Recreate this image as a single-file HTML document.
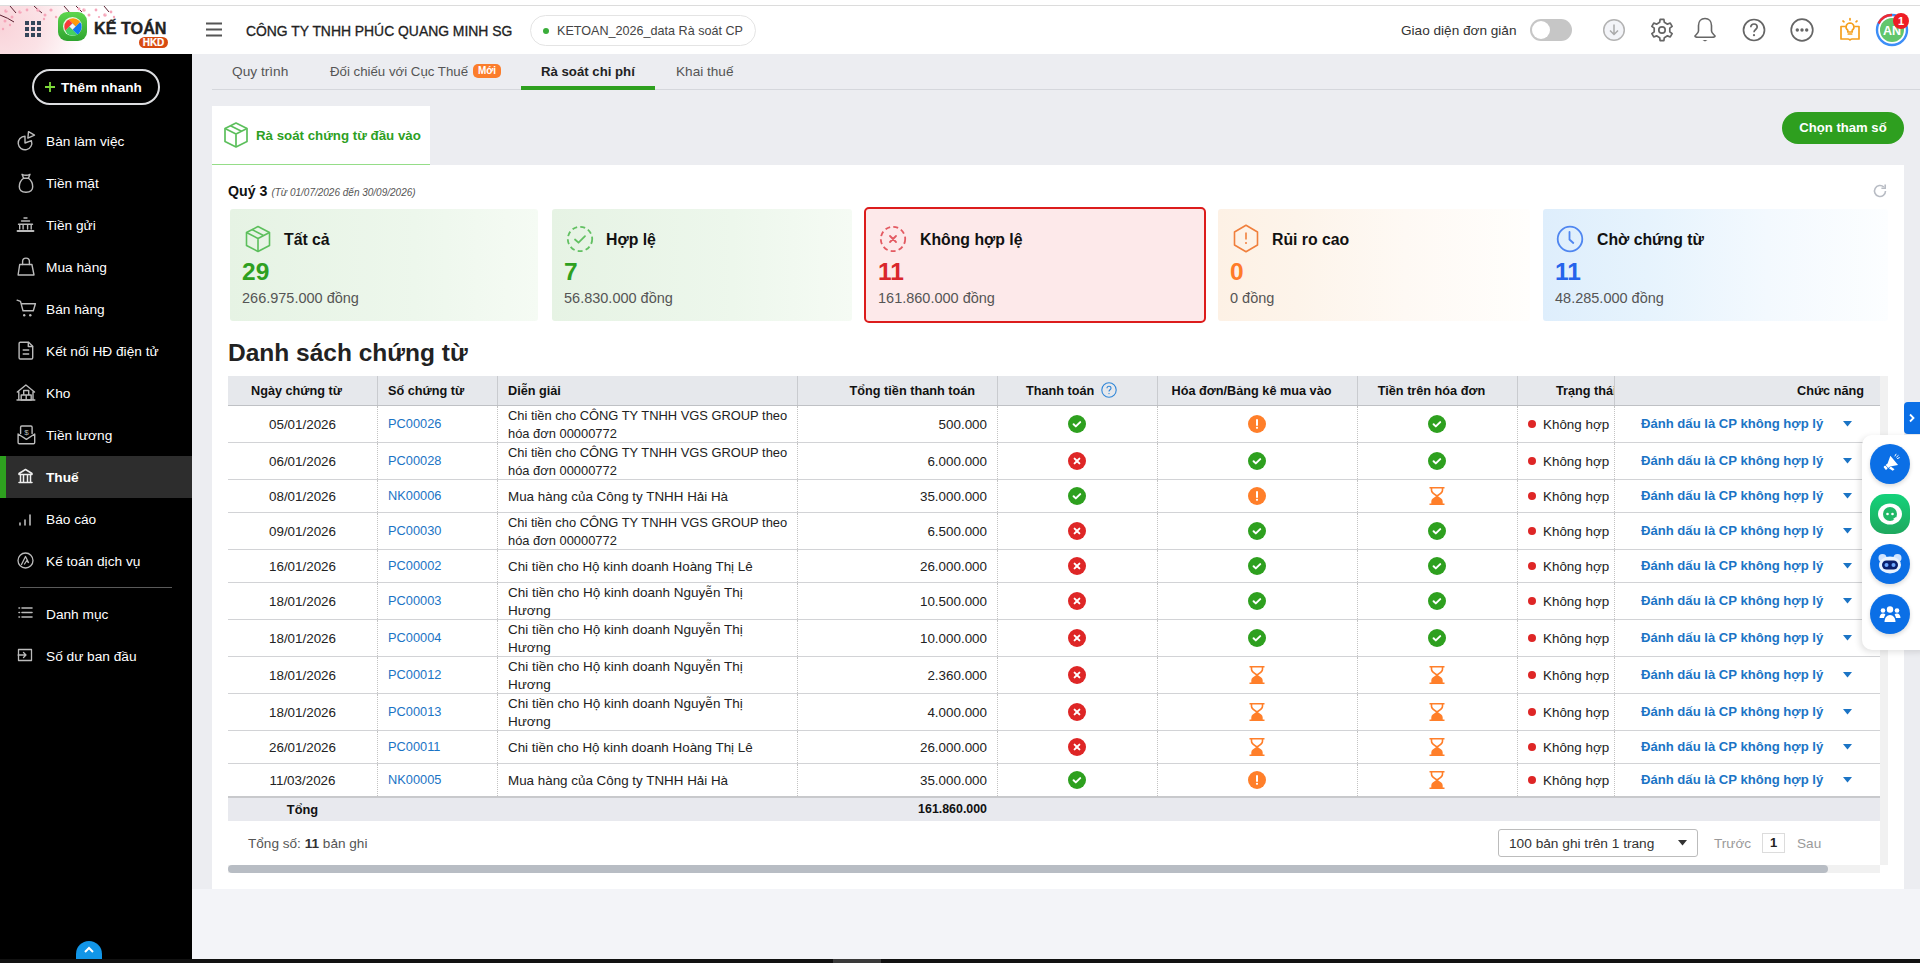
<!DOCTYPE html>
<html><head><meta charset="utf-8">
<style>
*{box-sizing:border-box;margin:0;padding:0}
html,body{width:1920px;height:963px;overflow:hidden}
body{position:relative;background:#f3f4f8;font-family:"Liberation Sans",sans-serif;color:#222;font-size:13.5px}
.abs{position:absolute}
#topline{left:0;top:0;width:1920px;height:6px;background:#fff;border-bottom:1px solid #dcdcdc}
#header{left:0;top:6px;width:1920px;height:48px;background:#fff}
#blossom{left:0;top:6px;width:135px;height:48px;background:radial-gradient(ellipse 85px 75px at 0px 20px,#f9d3d9 0%,#fbe2e6 50%,rgba(255,255,255,0) 100%)}
#sidebar{left:0;top:54px;width:192px;height:905px;background:#000}
#main{left:192px;top:54px;width:1728px;height:835px;background:#ecedf1}
#bottombar{left:0;top:959px;width:1920px;height:4px;background:#111}
.menu{position:absolute;left:0;width:192px;height:42px;color:#fff;font-size:13.7px;line-height:42px}
.menu span.t{position:absolute;left:46px;top:1px}
.menu svg{position:absolute;left:17px;top:12px}
.menu.active{background:#2d2d2d}
.menu.active:before{content:"";position:absolute;left:0;top:0;width:6px;height:42px;background:#2ea01f}
.menu.active span.t{font-weight:bold}
.cardt{top:230px;font-size:15.8px;font-weight:bold;color:#111;line-height:20px}
.cardn{top:258px;font-size:24.5px;font-weight:bold;line-height:28px}
.carda{top:289px;font-size:14.5px;color:#555;line-height:18px}
</style></head>
<body>
<div id="topline" class="abs"></div>
<div id="header" class="abs"></div>
<div id="blossom" class="abs"></div>

<div class="abs" style="left:0;top:6px;width:1920px;height:48px">
  <!-- blossoms -->
  <svg class="abs" style="left:0;top:0" width="130" height="48" viewBox="0 0 130 48">
    <path d="M0 9 Q8 12 14 16 M10 0 L16 7 M34 0 Q38 4 42 7 M64 0 L70 7 M76 0 L82 6 M104 0 L109 6" stroke="#5a2030" stroke-width="1" fill="none"/>
    <g fill="#f6a6ba">
      <circle cx="6" cy="5" r="1.8"/><circle cx="12" cy="11" r="1.5"/><circle cx="20" cy="6" r="1.8"/><circle cx="27" cy="4" r="1.4"/>
      <circle cx="38" cy="4" r="1.8"/><circle cx="45" cy="9" r="1.5"/><circle cx="51" cy="4" r="1.6"/><circle cx="44" cy="13" r="1.2"/>
      <circle cx="84" cy="4" r="1.8"/><circle cx="89" cy="9" r="1.5"/><circle cx="79" cy="3" r="1.4"/><circle cx="96" cy="4" r="1.4"/>
      <circle cx="105" cy="9" r="1.8"/><circle cx="111" cy="6" r="1.4"/><circle cx="114" cy="11" r="1.2"/><circle cx="5" cy="15" r="1.5"/>
      <circle cx="3" cy="23" r="1.2"/><circle cx="10" cy="19" r="1.2"/><circle cx="56" cy="11" r="1.2"/><circle cx="99" cy="11" r="1.1"/>
    </g>
    <g fill="#fff" opacity="0.8">
      <circle cx="7" cy="4" r="0.7"/><circle cx="21" cy="5" r="0.7"/><circle cx="39" cy="3" r="0.7"/><circle cx="85" cy="3" r="0.7"/><circle cx="106" cy="8" r="0.7"/>
    </g>
  </svg>
  <!-- grid -->
  <svg class="abs" style="left:25px;top:15px" width="16" height="16" viewBox="0 0 16 16" fill="#34465a">
    <rect x="0" y="0" width="4" height="4"/><rect x="6" y="0" width="4" height="4"/><rect x="12" y="0" width="4" height="4"/>
    <rect x="0" y="6" width="4" height="4"/><rect x="6" y="6" width="4" height="4"/><rect x="12" y="6" width="4" height="4"/>
    <rect x="0" y="12" width="4" height="4"/><rect x="6" y="12" width="4" height="4"/><rect x="12" y="12" width="4" height="4"/>
  </svg>
  <!-- logo -->
  <div class="abs" style="left:58px;top:6px;width:29px;height:29px;border-radius:9px;background:linear-gradient(#5ed64e,#2ea42f)"></div>
  <svg class="abs" style="left:62px;top:10px" width="21" height="21" viewBox="0 0 21 21">
    <defs><clipPath id="lc"><circle cx="10.5" cy="10.5" r="8.7"/></clipPath></defs>
    <circle cx="10.5" cy="10.5" r="9.5" fill="#e9f7e6"/>
    <g clip-path="url(#lc)" transform="translate(0.5 0.5)">
      <path d="M10 6.8L-10 -13.2L36.4 -13.2L13.2 10Z" fill="#ff9a0a"/>
      <path d="M13.2 10L36.4 -13.2L40 -13.2L40 33.2L30 33.2L10 13.2Z" fill="#0f78f2"/>
      <path d="M10 13.2L30 33.2L-16.4 33.2L6.8 10Z" fill="#45d160"/>
      <path d="M6.8 10L-16.4 33.2L-20 33.2L-20 -13.2L-10 -13.2L10 6.8Z" fill="#f83a3a"/>
      <path d="M10 6.8L13.2 10L10 13.2L6.8 10Z" fill="#f2f5f8" stroke="#556" stroke-width="0.3"/>
    </g>
  </svg>
  <div class="abs" style="left:94px;top:12px;font-size:16.2px;font-weight:bold;color:#222;line-height:20px;letter-spacing:0;-webkit-text-stroke:0.35px #222">KẾ TOÁN</div>
  <div class="abs" style="left:139px;top:31px;width:29px;height:11px;border-radius:6px;background:#d84a10;color:#fff;font-size:10px;font-weight:bold;line-height:11px;text-align:center;-webkit-text-stroke:0.2px #fff">HKD</div>
  <!-- hamburger -->
  <svg class="abs" style="left:205px;top:16px" width="18" height="15" viewBox="0 0 18 15"><path d="M1 1.5h16M1 7.5h16M1 13.5h16" stroke="#555" stroke-width="1.8"/></svg>
  <div class="abs" style="left:246px;top:16px;font-size:13.9px;color:#222;line-height:18px;-webkit-text-stroke:0.3px #222">CÔNG TY TNHH PHÚC QUANG MINH SG</div>
  <div class="abs" style="left:530px;top:9px;width:226px;height:31px;border:1px solid #e4e4e4;border-radius:16px"></div>
  <div class="abs" style="left:543px;top:22px;width:6px;height:6px;border-radius:3px;background:#3aad3a"></div>
  <div class="abs" style="left:557px;top:16px;font-size:12.6px;color:#444;line-height:18px">KETOAN_2026_data Rà soát CP</div>
  <!-- right -->
  <div class="abs" style="left:1401px;top:16px;font-size:13.6px;color:#333;line-height:18px">Giao diện đơn giản</div>
  <div class="abs" style="left:1530px;top:13px;width:42px;height:22px;border-radius:11px;background:#c6c6c6"></div>
  <div class="abs" style="left:1532px;top:15px;width:18px;height:18px;border-radius:9px;background:#fff"></div>
  <svg class="abs" style="left:1602px;top:12px" width="24" height="24" viewBox="0 0 24 24"><circle cx="12" cy="12" r="10.3" fill="#f3f4f8" stroke="#b3b3b3" stroke-width="1.5"/><path d="M12 6.5v10M8 12.5l4 4 4-4" fill="none" stroke="#aaa" stroke-width="1.5"/></svg>
  <svg class="abs" style="left:1650px;top:12px" width="24" height="24" viewBox="0 0 24 24"><path fill="none" stroke="#666" stroke-width="1.7" stroke-linejoin="round" d="M9.66 4.35 L10.12 1.36 L13.88 1.36 L14.34 4.35 L17.46 6.15 L20.27 5.06 L22.15 8.31 L19.79 10.20 L19.79 13.80 L22.15 15.69 L20.27 18.94 L17.46 17.85 L14.34 19.65 L13.88 22.64 L10.12 22.64 L9.66 19.65 L6.54 17.85 L3.73 18.94 L1.85 15.69 L4.21 13.80 L4.21 10.20 L1.85 8.31 L3.73 5.06 L6.54 6.15Z"/><circle cx="12" cy="12" r="3.2" fill="none" stroke="#666" stroke-width="1.7"/></svg>
  <svg class="abs" style="left:1693px;top:11px" width="24" height="26" viewBox="0 0 24 26"><path d="M12 1.5c-4 0-6.5 3-6.5 7v5.5c0 2-2.5 3.5-3.5 5 0 .8 1 1.2 3 1.2h14c2 0 3-.4 3-1.2-1-1.5-3.5-3-3.5-5V8.5c0-4-2.5-7-6.5-7Z" fill="none" stroke="#666" stroke-width="1.6"/><path d="M9.5 23h5l-2.5 1.6Z" fill="#666"/></svg>
  <svg class="abs" style="left:1742px;top:12px" width="24" height="24" viewBox="0 0 24 24"><circle cx="12" cy="12" r="10.5" fill="none" stroke="#666" stroke-width="1.7"/><path d="M8.8 9.2c0-1.9 1.4-3.2 3.2-3.2s3.2 1.2 3.2 3c0 2.4-3.2 2.6-3.2 5.2" fill="none" stroke="#666" stroke-width="1.7"/><circle cx="12" cy="17.2" r="1.1" fill="#666"/></svg>
  <svg class="abs" style="left:1790px;top:12px" width="24" height="24" viewBox="0 0 24 24"><circle cx="12" cy="12" r="10.8" fill="none" stroke="#666" stroke-width="1.7"/><circle cx="7.3" cy="12" r="1.7" fill="#666"/><circle cx="12" cy="12" r="1.7" fill="#666"/><circle cx="16.7" cy="12" r="1.7" fill="#666"/></svg>
  <svg class="abs" style="left:1839px;top:11px" width="22" height="24" viewBox="0 0 22 24"><g fill="none" stroke="#f5a01f" stroke-width="1.7" stroke-linecap="round" stroke-linejoin="round"><path d="M11 1.5v1.5M4 4l1 .8M18 4l-1 .8"/><path d="M11 6a4 4 0 0 0-2.2 7.3v1.7h4.4v-1.7A4 4 0 0 0 11 6Z"/><path d="M9.3 17h3.4"/><path d="M6 9.5H2v12.5h7c1 0 1.5.5 2 1 .5-.5 1-1 2-1h7V9.5h-4"/></g></svg>
  <svg class="abs" style="left:1874px;top:0px" width="40" height="42" viewBox="0 0 40 42"><circle cx="18" cy="24" r="15" fill="none" stroke="#3d8ef7" stroke-width="2.4"/><path d="M4.6 17.5A15 15 0 0 1 18 9" fill="none" stroke="#ee2a33" stroke-width="2.4"/><circle cx="18" cy="24" r="12" fill="#62c66c"/><text x="18" y="28.5" font-size="12.5" font-weight="bold" fill="#fff" text-anchor="middle" font-family="Liberation Sans">AN</text><circle cx="27" cy="15" r="8" fill="#ee1c25"/><text x="27" y="19" font-size="11" font-weight="bold" fill="#fff" text-anchor="middle" font-family="Liberation Sans">1</text></svg>
</div>
<div id="sidebar" class="abs">
  <div class="abs" style="left:32px;top:15px;width:128px;height:36px;border:2px solid #dcdde0;border-radius:18px"></div>
  <svg class="abs" style="left:45px;top:28px" width="10" height="10" viewBox="0 0 10 10"><path d="M5 0v10M0 5h10" stroke="#7ddb3a" stroke-width="1.8"/></svg>
  <div class="abs" style="left:61px;top:26px;color:#fff;font-weight:bold;font-size:13.6px;line-height:16px">Thêm nhanh</div>
<div class="menu" style="top:66px"><svg style="left:16px;top:10px;overflow:visible" width="20" height="20" viewBox="0 0 20 20" stroke="#bbb" stroke-width="1.4" stroke-linecap="round" stroke-linejoin="round"><path d="M9 13L9 6.2A6.8 6.8 0 1 0 15.4 10.7Z" fill="none"/><path d="M12.5 1.6L18.5 5.2L11.9 8.1Z" fill="none"/></svg><span class="t">Bàn làm việc</span></div>
<div class="menu" style="top:108px"><svg style="left:16px;top:10px;overflow:visible" width="20" height="20" viewBox="0 0 20 20" stroke="#bbb" stroke-width="1.4" stroke-linecap="round" stroke-linejoin="round"><path d="M6 2.3Q10 4.2 14 2.3L12.4 6.3H7.6Z" fill="none"/><path d="M7.6 6.3C4.3 8.6 3.3 12 3.3 14.8C3.3 18.6 6.2 20.2 10 20.2S16.7 18.6 16.7 14.8C16.7 12 15.7 8.6 12.4 6.3" fill="none"/></svg><span class="t">Tiền mặt</span></div>
<div class="menu" style="top:150px"><svg style="left:16px;top:10px;overflow:visible" width="20" height="20" viewBox="0 0 20 20" stroke="#bbb" stroke-width="1.4" stroke-linecap="round" stroke-linejoin="round"><path d="M8 4h3M5.5 7h8M2.5 10.2h14M3.7 11v4M7.1 11v4M11.6 11v4M15.2 11v4" fill="none"/><path d="M1.5 17H17.5" fill="none" stroke-width="1.8"/></svg><span class="t">Tiền gửi</span></div>
<div class="menu" style="top:192px"><svg style="left:16px;top:10px;overflow:visible" width="20" height="20" viewBox="0 0 20 20" stroke="#bbb" stroke-width="1.4" stroke-linecap="round" stroke-linejoin="round"><path d="M3.7 8.5H15.9L18 19H2.1Z" fill="none"/><path d="M6.6 8.5V5.5a3.4 3.4 0 0 1 6.8 0V8.5" fill="none"/></svg><span class="t">Mua hàng</span></div>
<div class="menu" style="top:234px"><svg style="left:16px;top:10px;overflow:visible" width="20" height="20" viewBox="0 0 20 20" stroke="#bbb" stroke-width="1.4" stroke-linecap="round" stroke-linejoin="round"><path d="M1.1 2.2L4.5 3.4L7 12.8H17.3L19.4 5.7H5.2" fill="none"/><circle cx="8.2" cy="17.3" r="1.2" fill="#bbb" stroke="none"/><circle cx="14.3" cy="17.3" r="1.2" fill="#bbb" stroke="none"/></svg><span class="t">Bán hàng</span></div>
<div class="menu" style="top:276px"><svg style="left:16px;top:10px;overflow:visible" width="20" height="20" viewBox="0 0 20 20" stroke="#bbb" stroke-width="1.4" stroke-linecap="round" stroke-linejoin="round"><path d="M4 2.2H12.6L16.7 6.3V17.8A1.2 1.2 0 0 1 15.5 19H4.3A1.2 1.2 0 0 1 3.1 17.8V3.4A1.2 1.2 0 0 1 4.3 2.2Z" fill="none"/><path d="M12.3 2.4V6.5H16.5" fill="none"/><path d="M7.2 10h5.5M7.2 14h5.5" fill="none"/></svg><span class="t">Kết nối HĐ điện tử</span></div>
<div class="menu" style="top:318px"><svg style="left:16px;top:10px;overflow:visible" width="20" height="20" viewBox="0 0 20 20" stroke="#bbb" stroke-width="1.4" stroke-linecap="round" stroke-linejoin="round"><path d="M1.3 10L9.9 3L18.5 10M2.8 8.8V17.8M17 8.8V17.8M1 18H18.8" fill="none"/><path d="M5.2 13H10.2V18H5.2ZM10.2 13H15.2V18H10.2ZM7.7 8.5H12.7V13H7.7Z" fill="none"/></svg><span class="t">Kho</span></div>
<div class="menu" style="top:360px"><svg style="left:16px;top:10px;overflow:visible" width="20" height="20" viewBox="0 0 20 20" stroke="#bbb" stroke-width="1.4" stroke-linecap="round" stroke-linejoin="round"><path d="M4.6 9.5V3.2A1.2 1.2 0 0 1 5.8 2H14.9A1.2 1.2 0 0 1 16.1 3.2V9.5" fill="none"/><path d="M2.1 10V18.5A1.2 1.2 0 0 0 3.3 19.7H17.5A1.2 1.2 0 0 0 18.7 18.5V10L10.4 15.3Z" fill="none"/><text x="10.4" y="10.5" font-size="8" text-anchor="middle" fill="#bbb" stroke="none" font-family="Liberation Sans">$</text></svg><span class="t">Tiền lương</span></div>
<div class="menu active" style="top:402px"><svg width="17" height="17" viewBox="0 0 17 17" stroke="#bbb" stroke-width="1.3" stroke-linecap="round" stroke-linejoin="round"><path d="M8.5 1.5L2 5.5v1h13v-1Z M3.5 7.5v6 M6.5 7.5v6 M10.5 7.5v6 M13.5 7.5v6 M2 14.5h13" fill="none" stroke="#eee" stroke-width="1.5"/></svg><span class="t">Thuế</span></div>
<div class="menu" style="top:444px"><svg width="17" height="17" viewBox="0 0 17 17" stroke="#bbb" stroke-width="1.3" stroke-linecap="round" stroke-linejoin="round"><path d="M3 13v2 M8 10v5 M13 5v10" fill="none" stroke-width="1.6"/></svg><span class="t">Báo cáo</span></div>
<div class="menu" style="top:486px"><svg width="17" height="17" viewBox="0 0 17 17" stroke="#bbb" stroke-width="1.3" stroke-linecap="round" stroke-linejoin="round"><circle cx="8.5" cy="8.5" r="7.5" fill="none"/><path d="M4.5 12.5L8.5 4.5l3 6 -2-1.5 -2 3" fill="none"/></svg><span class="t">Kế toán dịch vụ</span></div>
<div class="menu" style="top:539px"><svg width="17" height="17" viewBox="0 0 17 17" stroke="#bbb" stroke-width="1.3" stroke-linecap="round" stroke-linejoin="round"><path d="M2 3h.5M2 7.5h.5M2 12h.5 M5 3h10M5 7.5h10M5 12h10" fill="none" stroke-width="1.6"/></svg><span class="t">Danh mục</span></div>
<div class="menu" style="top:581px"><svg width="17" height="17" viewBox="0 0 17 17" stroke="#bbb" stroke-width="1.3" stroke-linecap="round" stroke-linejoin="round"><path d="M1.5 2.5h13v11h-13Z M1 8h8 M6.5 5.5L9 8l-2.5 2.5" fill="none"/></svg><span class="t">Số dư ban đầu</span></div>
<div class="abs" style="left:20px;top:533px;width:152px;height:1px;background:#5a5a5a"></div>
<div class="abs" style="left:76px;top:887px;width:26px;height:22px;border-radius:13px 13px 0 0;background:#1296e8"><svg class="abs" style="left:7px;top:5px" width="12" height="8" viewBox="0 0 12 8"><path d="M2 6L6 2l4 4" fill="none" stroke="#fff" stroke-width="2"/></svg></div>
</div>
<div id="main" class="abs"></div>

<!-- tabs -->
<div class="abs" style="left:212px;top:89px;width:1708px;height:1px;background:#d5d7dc"></div>
<div class="abs" style="left:232px;top:63px;font-size:13.7px;color:#555;line-height:18px">Quy trình</div>
<div class="abs" style="left:330px;top:63px;font-size:13.25px;color:#555;line-height:18px">Đối chiếu với Cục Thuế</div>
<div class="abs" style="left:473px;top:64px;width:28px;height:14px;border-radius:5px;background:#fb7d2c;color:#fff;font-size:10px;font-weight:bold;line-height:14px;text-align:center">Mới</div>
<div class="abs" style="left:541px;top:63px;font-size:13.2px;color:#222;font-weight:bold;line-height:18px">Rà soát chi phí</div>
<div class="abs" style="left:521px;top:86px;width:134px;height:4px;background:#2ea01f"></div>
<div class="abs" style="left:676px;top:63px;font-size:13.6px;color:#555;line-height:18px">Khai thuế</div>
<!-- subtab -->
<div class="abs" style="left:212px;top:106px;width:218px;height:58px;background:#fff"></div>
<svg class="abs" style="left:223px;top:121px" width="26" height="28" viewBox="0 0 26 28"><g fill="none" stroke="#5cbf5c" stroke-width="1.7" stroke-linejoin="round"><path d="M13 2L24 7.5V20.5L13 26L2 20.5V7.5Z"/><path d="M2 7.5L13 13L24 7.5M13 13V26M7.5 4.7L18.5 10.2"/></g></svg>
<div class="abs" style="left:256px;top:127px;font-size:13.3px;color:#2ea01f;font-weight:bold;line-height:18px">Rà soát chứng từ đầu vào</div>
<!-- button -->
<div class="abs" style="left:1782px;top:112px;width:122px;height:32px;border-radius:16px;background:#2e9f1f;color:#fff;font-weight:bold;font-size:13.1px;line-height:32px;text-align:center">Chọn tham số</div>
<!-- panel -->
<div class="abs" style="left:212px;top:165px;width:1692px;height:724px;background:#fff"></div>
<div class="abs" style="left:212px;top:164px;width:218px;height:1px;background:#95dd88"></div>
<div class="abs" style="left:228px;top:181px;font-size:14.2px;font-weight:bold;color:#111;line-height:20px">Quý 3 <span style="font-size:10px;font-weight:normal;font-style:italic;color:#555">(Từ 01/07/2026 đến 30/09/2026)</span></div>
<svg class="abs" style="left:1871px;top:182px" width="18" height="18" viewBox="0 0 18 18"><path d="M14.5 9A5.5 5.5 0 1 1 12.8 5" fill="none" stroke="#b8bcc4" stroke-width="1.6"/><path d="M14.2 2.5V6.3H10.4" fill="none" stroke="#b8bcc4" stroke-width="1.6"/></svg>

<!-- cards -->
<div class="abs" style="left:230px;top:209px;width:308px;height:112px;border-radius:3px;background:linear-gradient(90deg,#e6f3e4 0%,#edf7ec 60%,#f5fbf4 100%)"></div>
<div class="abs" style="left:552px;top:209px;width:300px;height:112px;border-radius:3px;background:linear-gradient(90deg,#e6f3e4 0%,#edf7ec 60%,#f5fbf4 100%)"></div>
<div class="abs" style="left:864px;top:207px;width:342px;height:116px;border-radius:5px;border:2px solid #dc1c1c;background:#fde9ea"></div>
<div class="abs" style="left:1218px;top:209px;width:312px;height:112px;border-radius:3px;background:linear-gradient(90deg,#fdf1e5 0%,#fdf4ea 25%,#fef9f4 60%,#fffefc 100%)"></div>
<div class="abs" style="left:1543px;top:209px;width:345px;height:112px;border-radius:3px;background:linear-gradient(90deg,#deeefc 0%,#e6f3fd 30%,#f3f9fe 65%,#fcfeff 100%)"></div>

<svg class="abs" style="left:244px;top:225px" width="28" height="28" viewBox="0 0 28 28"><g fill="none" stroke="#5cbf5c" stroke-width="1.6" stroke-linejoin="round"><path d="M14 1.5L25.5 7.5V20.5L14 26.5L2.5 20.5V7.5Z"/><path d="M2.5 7.5L14 13.5L25.5 7.5M14 13.5V26.5M8 4.5L19.5 10.5"/></g></svg>
<svg class="abs" style="left:566px;top:225px" width="28" height="28" viewBox="0 0 28 28"><circle cx="14" cy="14" r="12.2" fill="none" stroke="#62c062" stroke-width="1.8" stroke-dasharray="5 3.2"/><path d="M9 14.5l3.5 3.2 6.5-6.5" fill="none" stroke="#62c062" stroke-width="1.8" stroke-linecap="round" stroke-linejoin="round"/></svg>
<svg class="abs" style="left:879px;top:225px" width="28" height="28" viewBox="0 0 28 28"><circle cx="14" cy="14" r="12.2" fill="none" stroke="#e35a62" stroke-width="1.8" stroke-dasharray="5 3.2"/><path d="M11 11l6 6M17 11l-6 6" fill="none" stroke="#e35a62" stroke-width="1.8" stroke-linecap="round"/></svg>
<svg class="abs" style="left:1231px;top:223px" width="30" height="31" viewBox="0 0 30 31"><path d="M15 2.3L26.5 9v13L15 28.7L3.5 22V9Z" fill="none" stroke="#f07f3c" stroke-width="1.6" stroke-linejoin="round"/><path d="M15 9.5v7" stroke="#f07f3c" stroke-width="1.6"/><circle cx="15" cy="20" r="1" fill="#f07f3c"/></svg>
<svg class="abs" style="left:1556px;top:225px" width="28" height="28" viewBox="0 0 28 28"><circle cx="14" cy="14" r="12.3" fill="none" stroke="#4f86f0" stroke-width="1.8"/><path d="M13.5 7v7.5l3.8 3.5" fill="none" stroke="#4f86f0" stroke-width="1.8" stroke-linecap="round"/></svg>

<div class="abs cardt" style="left:284px">Tất cả</div>
<div class="abs cardt" style="left:606px">Hợp lệ</div>
<div class="abs cardt" style="left:920px">Không hợp lệ</div>
<div class="abs cardt" style="left:1272px">Rủi ro cao</div>
<div class="abs cardt" style="left:1597px">Chờ chứng từ</div>

<div class="abs cardn" style="left:242px;color:#2ea01f">29</div>
<div class="abs cardn" style="left:564px;color:#2ea01f">7</div>
<div class="abs cardn" style="left:878px;color:#d9262c">11</div>
<div class="abs cardn" style="left:1230px;color:#ff7b29">0</div>
<div class="abs cardn" style="left:1555px;color:#2563eb">11</div>

<div class="abs carda" style="left:242px">266.975.000 đồng</div>
<div class="abs carda" style="left:564px">56.830.000 đồng</div>
<div class="abs carda" style="left:878px">161.860.000 đồng</div>
<div class="abs carda" style="left:1230px">0 đồng</div>
<div class="abs carda" style="left:1555px">48.285.000 đồng</div>

<div class="abs" style="left:228px;top:338px;font-size:24.5px;font-weight:bold;color:#222;line-height:30px">Danh sách chứng từ</div>
<!-- table -->
<div class="abs" style="left:228px;top:376px;width:1652px;height:29px;background:#e6e8ec"></div>
<div class="abs" style="left:1880px;top:376px;width:8px;height:489px;background:#f1f1f1"></div>
<div class="abs" style="left:377px;top:376px;width:1px;height:29px;background:#c9cbcf"></div>
<div class="abs" style="left:497px;top:376px;width:1px;height:29px;background:#c9cbcf"></div>
<div class="abs" style="left:797px;top:376px;width:1px;height:29px;background:#c9cbcf"></div>
<div class="abs" style="left:997px;top:376px;width:1px;height:29px;background:#c9cbcf"></div>
<div class="abs" style="left:1157px;top:376px;width:1px;height:29px;background:#c9cbcf"></div>
<div class="abs" style="left:1357px;top:376px;width:1px;height:29px;background:#c9cbcf"></div>
<div class="abs" style="left:1517px;top:376px;width:1px;height:29px;background:#c9cbcf"></div>
<div class="abs" style="left:1614px;top:376px;width:1px;height:29px;background:#c9cbcf"></div>
<div class="abs" style="left:228px;top:405px;width:1652px;height:1px;background:#bfc1c5"></div>
<div class="abs" style="left:228px;width:137px;text-align:center;top:377px;height:29px;line-height:29px;font-size:12.7px;font-weight:bold;color:#111;white-space:nowrap">Ngày chứng từ</div>
<div class="abs" style="left:388px;top:377px;height:29px;line-height:29px;font-size:12.7px;font-weight:bold;color:#111;white-space:nowrap">Số chứng từ</div>
<div class="abs" style="left:508px;top:377px;height:29px;line-height:29px;font-size:12.7px;font-weight:bold;color:#111;white-space:nowrap">Diễn giải</div>
<div class="abs" style="left:798px;width:177px;text-align:right;top:377px;height:29px;line-height:29px;font-size:12.7px;font-weight:bold;color:#111;white-space:nowrap">Tổng tiền thanh toán</div>
<div class="abs" style="left:1026px;top:377px;height:29px;line-height:29px;font-size:12.7px;font-weight:bold;color:#111;white-space:nowrap">Thanh toán</div>
<svg class="abs" style="left:1101px;top:382px" width="16" height="16" viewBox="0 0 16 16"><circle cx="8" cy="8" r="7.2" fill="none" stroke="#2f86d8" stroke-width="1.1"/><path d="M6 6.3c0-1.2.9-2 2-2s2 .8 2 1.9c0 1.5-2 1.6-2 3.2" fill="none" stroke="#2f86d8" stroke-width="1.1"/><circle cx="8" cy="11.6" r=".7" fill="#2f86d8"/></svg>
<div class="abs" style="left:1158px;width:187px;text-align:center;top:377px;height:29px;line-height:29px;font-size:12.7px;font-weight:bold;color:#111;white-space:nowrap">Hóa đơn/Bảng kê mua vào</div>
<div class="abs" style="left:1358px;width:147px;text-align:center;top:377px;height:29px;line-height:29px;font-size:12.7px;font-weight:bold;color:#111;white-space:nowrap">Tiền trên hóa đơn</div>
<div class="abs" style="left:1518px;width:96px;overflow:hidden;top:377px;height:29px;line-height:29px;font-size:12.7px;font-weight:bold;color:#111;white-space:nowrap"><div style="position:absolute;left:38px;top:0">Trạng thái</div></div>
<div class="abs" style="left:1615px;width:249px;text-align:right;top:377px;height:29px;line-height:29px;font-size:12.7px;font-weight:bold;color:#111;white-space:nowrap">Chức năng</div>
<div class="abs" style="left:228px;top:442px;width:1652px;height:1px;background:#d2d3d6"></div>
<div class="abs" style="left:377px;top:406px;width:0;height:36px;border-left:1px dotted #c3c3c3"></div>
<div class="abs" style="left:497px;top:406px;width:0;height:36px;border-left:1px dotted #c3c3c3"></div>
<div class="abs" style="left:797px;top:406px;width:0;height:36px;border-left:1px dotted #c3c3c3"></div>
<div class="abs" style="left:997px;top:406px;width:0;height:36px;border-left:1px dotted #c3c3c3"></div>
<div class="abs" style="left:1157px;top:406px;width:0;height:36px;border-left:1px dotted #c3c3c3"></div>
<div class="abs" style="left:1357px;top:406px;width:0;height:36px;border-left:1px dotted #c3c3c3"></div>
<div class="abs" style="left:1517px;top:406px;width:0;height:36px;border-left:1px dotted #c3c3c3"></div>
<div class="abs" style="left:1614px;top:406px;width:0;height:36px;border-left:1px dotted #c3c3c3"></div>
<div class="abs" style="left:228px;top:406px;width:149px;height:37px;line-height:37px;text-align:center;font-size:13.4px;color:#222;white-space:nowrap">05/01/2026</div>
<div class="abs" style="left:388px;top:405px;height:37px;line-height:37px;font-size:12.8px;color:#1b74c5;white-space:nowrap">PC00026</div>
<div class="abs" style="left:508px;top:407px;line-height:17.5px;font-size:13.4px;color:#222;white-space:nowrap;font-size:12.9px">Chi tiền cho CÔNG TY TNHH VGS GROUP theo<br>hóa đơn 00000772</div>
<div class="abs" style="left:798px;top:406px;width:189px;text-align:right;height:37px;line-height:37px;font-size:13.4px;color:#222;white-space:nowrap">500.000</div>
<svg class="abs" style="left:1068px;top:415px" width="18" height="18" viewBox="0 0 18 18"><circle cx="9" cy="9" r="9" fill="#2ea01f"/><path d="M5.6 9.3l2.2 2.1 4.4-4.3" fill="none" stroke="#fff" stroke-width="2" stroke-linecap="round" stroke-linejoin="round"/></svg>
<svg class="abs" style="left:1248px;top:415px" width="18" height="18" viewBox="0 0 18 18"><circle cx="9" cy="9" r="9" fill="#ff7f2a"/><path d="M9 5v5" stroke="#fff" stroke-width="2" stroke-linecap="round"/><circle cx="9" cy="12.8" r="1.1" fill="#fff"/></svg>
<svg class="abs" style="left:1428px;top:415px" width="18" height="18" viewBox="0 0 18 18"><circle cx="9" cy="9" r="9" fill="#2ea01f"/><path d="M5.6 9.3l2.2 2.1 4.4-4.3" fill="none" stroke="#fff" stroke-width="2" stroke-linecap="round" stroke-linejoin="round"/></svg>
<div class="abs" style="left:1528px;top:420px;width:8px;height:8px;border-radius:4px;background:#de2626"></div>
<div class="abs" style="left:1518px;top:406px;width:96px;height:36px;overflow:hidden"><div class="abs" style="left:25px;top:0;line-height:37px;font-size:13.4px;color:#222;white-space:nowrap">Không hợp</div></div>
<div class="abs" style="left:1641px;top:405px;height:37px;line-height:37px;font-size:13.1px;font-weight:bold;color:#1b74c5;white-space:nowrap">Đánh dấu là CP không hợp lý</div>
<svg class="abs" style="left:1843px;top:421px" width="9" height="6" viewBox="0 0 9 6"><path d="M0 0h9L4.5 5.5Z" fill="#1b74c5"/></svg>
<div class="abs" style="left:228px;top:479px;width:1652px;height:1px;background:#d2d3d6"></div>
<div class="abs" style="left:377px;top:443px;width:0;height:36px;border-left:1px dotted #c3c3c3"></div>
<div class="abs" style="left:497px;top:443px;width:0;height:36px;border-left:1px dotted #c3c3c3"></div>
<div class="abs" style="left:797px;top:443px;width:0;height:36px;border-left:1px dotted #c3c3c3"></div>
<div class="abs" style="left:997px;top:443px;width:0;height:36px;border-left:1px dotted #c3c3c3"></div>
<div class="abs" style="left:1157px;top:443px;width:0;height:36px;border-left:1px dotted #c3c3c3"></div>
<div class="abs" style="left:1357px;top:443px;width:0;height:36px;border-left:1px dotted #c3c3c3"></div>
<div class="abs" style="left:1517px;top:443px;width:0;height:36px;border-left:1px dotted #c3c3c3"></div>
<div class="abs" style="left:1614px;top:443px;width:0;height:36px;border-left:1px dotted #c3c3c3"></div>
<div class="abs" style="left:228px;top:443px;width:149px;height:37px;line-height:37px;text-align:center;font-size:13.4px;color:#222;white-space:nowrap">06/01/2026</div>
<div class="abs" style="left:388px;top:442px;height:37px;line-height:37px;font-size:12.8px;color:#1b74c5;white-space:nowrap">PC00028</div>
<div class="abs" style="left:508px;top:444px;line-height:17.5px;font-size:13.4px;color:#222;white-space:nowrap;font-size:12.9px">Chi tiền cho CÔNG TY TNHH VGS GROUP theo<br>hóa đơn 00000772</div>
<div class="abs" style="left:798px;top:443px;width:189px;text-align:right;height:37px;line-height:37px;font-size:13.4px;color:#222;white-space:nowrap">6.000.000</div>
<svg class="abs" style="left:1068px;top:452px" width="18" height="18" viewBox="0 0 18 18"><circle cx="9" cy="9" r="9" fill="#de2626"/><path d="M6.6 6.6l4.8 4.8M11.4 6.6l-4.8 4.8" fill="none" stroke="#fff" stroke-width="2" stroke-linecap="round"/></svg>
<svg class="abs" style="left:1248px;top:452px" width="18" height="18" viewBox="0 0 18 18"><circle cx="9" cy="9" r="9" fill="#2ea01f"/><path d="M5.6 9.3l2.2 2.1 4.4-4.3" fill="none" stroke="#fff" stroke-width="2" stroke-linecap="round" stroke-linejoin="round"/></svg>
<svg class="abs" style="left:1428px;top:452px" width="18" height="18" viewBox="0 0 18 18"><circle cx="9" cy="9" r="9" fill="#2ea01f"/><path d="M5.6 9.3l2.2 2.1 4.4-4.3" fill="none" stroke="#fff" stroke-width="2" stroke-linecap="round" stroke-linejoin="round"/></svg>
<div class="abs" style="left:1528px;top:457px;width:8px;height:8px;border-radius:4px;background:#de2626"></div>
<div class="abs" style="left:1518px;top:443px;width:96px;height:36px;overflow:hidden"><div class="abs" style="left:25px;top:0;line-height:37px;font-size:13.4px;color:#222;white-space:nowrap">Không hợp</div></div>
<div class="abs" style="left:1641px;top:442px;height:37px;line-height:37px;font-size:13.1px;font-weight:bold;color:#1b74c5;white-space:nowrap">Đánh dấu là CP không hợp lý</div>
<svg class="abs" style="left:1843px;top:458px" width="9" height="6" viewBox="0 0 9 6"><path d="M0 0h9L4.5 5.5Z" fill="#1b74c5"/></svg>
<div class="abs" style="left:228px;top:512px;width:1652px;height:1px;background:#d2d3d6"></div>
<div class="abs" style="left:377px;top:480px;width:0;height:32px;border-left:1px dotted #c3c3c3"></div>
<div class="abs" style="left:497px;top:480px;width:0;height:32px;border-left:1px dotted #c3c3c3"></div>
<div class="abs" style="left:797px;top:480px;width:0;height:32px;border-left:1px dotted #c3c3c3"></div>
<div class="abs" style="left:997px;top:480px;width:0;height:32px;border-left:1px dotted #c3c3c3"></div>
<div class="abs" style="left:1157px;top:480px;width:0;height:32px;border-left:1px dotted #c3c3c3"></div>
<div class="abs" style="left:1357px;top:480px;width:0;height:32px;border-left:1px dotted #c3c3c3"></div>
<div class="abs" style="left:1517px;top:480px;width:0;height:32px;border-left:1px dotted #c3c3c3"></div>
<div class="abs" style="left:1614px;top:480px;width:0;height:32px;border-left:1px dotted #c3c3c3"></div>
<div class="abs" style="left:228px;top:480px;width:149px;height:33px;line-height:33px;text-align:center;font-size:13.4px;color:#222;white-space:nowrap">08/01/2026</div>
<div class="abs" style="left:388px;top:479px;height:33px;line-height:33px;font-size:12.8px;color:#1b74c5;white-space:nowrap">NK00006</div>
<div class="abs" style="left:508px;top:480px;height:33px;line-height:33px;font-size:13.4px;color:#222;white-space:nowrap">Mua hàng của Công ty TNHH Hải Hà</div>
<div class="abs" style="left:798px;top:480px;width:189px;text-align:right;height:33px;line-height:33px;font-size:13.4px;color:#222;white-space:nowrap">35.000.000</div>
<svg class="abs" style="left:1068px;top:487px" width="18" height="18" viewBox="0 0 18 18"><circle cx="9" cy="9" r="9" fill="#2ea01f"/><path d="M5.6 9.3l2.2 2.1 4.4-4.3" fill="none" stroke="#fff" stroke-width="2" stroke-linecap="round" stroke-linejoin="round"/></svg>
<svg class="abs" style="left:1248px;top:487px" width="18" height="18" viewBox="0 0 18 18"><circle cx="9" cy="9" r="9" fill="#ff7f2a"/><path d="M9 5v5" stroke="#fff" stroke-width="2" stroke-linecap="round"/><circle cx="9" cy="12.8" r="1.1" fill="#fff"/></svg>
<svg class="abs" style="left:1429px;top:487px" width="16" height="18" viewBox="0 0 16 18"><path d="M0.5 0.8h15M0.5 17.2h15" stroke="#ff7f2a" stroke-width="1.6"/><path d="M2.5 1v2.2c0 2.2 1.5 3.2 5.5 5.8 4-2.6 5.5-3.6 5.5-5.8V1" fill="none" stroke="#ff7f2a" stroke-width="1.6"/><path d="M2.3 17V14.5c0-2.5 2-3.5 5.7-6 3.7 2.5 5.7 3.5 5.7 6V17Z" fill="#ff7f2a"/></svg>
<div class="abs" style="left:1528px;top:492px;width:8px;height:8px;border-radius:4px;background:#de2626"></div>
<div class="abs" style="left:1518px;top:480px;width:96px;height:32px;overflow:hidden"><div class="abs" style="left:25px;top:0;line-height:33px;font-size:13.4px;color:#222;white-space:nowrap">Không hợp</div></div>
<div class="abs" style="left:1641px;top:479px;height:33px;line-height:33px;font-size:13.1px;font-weight:bold;color:#1b74c5;white-space:nowrap">Đánh dấu là CP không hợp lý</div>
<svg class="abs" style="left:1843px;top:493px" width="9" height="6" viewBox="0 0 9 6"><path d="M0 0h9L4.5 5.5Z" fill="#1b74c5"/></svg>
<div class="abs" style="left:228px;top:549px;width:1652px;height:1px;background:#d2d3d6"></div>
<div class="abs" style="left:377px;top:513px;width:0;height:36px;border-left:1px dotted #c3c3c3"></div>
<div class="abs" style="left:497px;top:513px;width:0;height:36px;border-left:1px dotted #c3c3c3"></div>
<div class="abs" style="left:797px;top:513px;width:0;height:36px;border-left:1px dotted #c3c3c3"></div>
<div class="abs" style="left:997px;top:513px;width:0;height:36px;border-left:1px dotted #c3c3c3"></div>
<div class="abs" style="left:1157px;top:513px;width:0;height:36px;border-left:1px dotted #c3c3c3"></div>
<div class="abs" style="left:1357px;top:513px;width:0;height:36px;border-left:1px dotted #c3c3c3"></div>
<div class="abs" style="left:1517px;top:513px;width:0;height:36px;border-left:1px dotted #c3c3c3"></div>
<div class="abs" style="left:1614px;top:513px;width:0;height:36px;border-left:1px dotted #c3c3c3"></div>
<div class="abs" style="left:228px;top:513px;width:149px;height:37px;line-height:37px;text-align:center;font-size:13.4px;color:#222;white-space:nowrap">09/01/2026</div>
<div class="abs" style="left:388px;top:512px;height:37px;line-height:37px;font-size:12.8px;color:#1b74c5;white-space:nowrap">PC00030</div>
<div class="abs" style="left:508px;top:514px;line-height:17.5px;font-size:13.4px;color:#222;white-space:nowrap;font-size:12.9px">Chi tiền cho CÔNG TY TNHH VGS GROUP theo<br>hóa đơn 00000772</div>
<div class="abs" style="left:798px;top:513px;width:189px;text-align:right;height:37px;line-height:37px;font-size:13.4px;color:#222;white-space:nowrap">6.500.000</div>
<svg class="abs" style="left:1068px;top:522px" width="18" height="18" viewBox="0 0 18 18"><circle cx="9" cy="9" r="9" fill="#de2626"/><path d="M6.6 6.6l4.8 4.8M11.4 6.6l-4.8 4.8" fill="none" stroke="#fff" stroke-width="2" stroke-linecap="round"/></svg>
<svg class="abs" style="left:1248px;top:522px" width="18" height="18" viewBox="0 0 18 18"><circle cx="9" cy="9" r="9" fill="#2ea01f"/><path d="M5.6 9.3l2.2 2.1 4.4-4.3" fill="none" stroke="#fff" stroke-width="2" stroke-linecap="round" stroke-linejoin="round"/></svg>
<svg class="abs" style="left:1428px;top:522px" width="18" height="18" viewBox="0 0 18 18"><circle cx="9" cy="9" r="9" fill="#2ea01f"/><path d="M5.6 9.3l2.2 2.1 4.4-4.3" fill="none" stroke="#fff" stroke-width="2" stroke-linecap="round" stroke-linejoin="round"/></svg>
<div class="abs" style="left:1528px;top:527px;width:8px;height:8px;border-radius:4px;background:#de2626"></div>
<div class="abs" style="left:1518px;top:513px;width:96px;height:36px;overflow:hidden"><div class="abs" style="left:25px;top:0;line-height:37px;font-size:13.4px;color:#222;white-space:nowrap">Không hợp</div></div>
<div class="abs" style="left:1641px;top:512px;height:37px;line-height:37px;font-size:13.1px;font-weight:bold;color:#1b74c5;white-space:nowrap">Đánh dấu là CP không hợp lý</div>
<svg class="abs" style="left:1843px;top:528px" width="9" height="6" viewBox="0 0 9 6"><path d="M0 0h9L4.5 5.5Z" fill="#1b74c5"/></svg>
<div class="abs" style="left:228px;top:582px;width:1652px;height:1px;background:#d2d3d6"></div>
<div class="abs" style="left:377px;top:550px;width:0;height:32px;border-left:1px dotted #c3c3c3"></div>
<div class="abs" style="left:497px;top:550px;width:0;height:32px;border-left:1px dotted #c3c3c3"></div>
<div class="abs" style="left:797px;top:550px;width:0;height:32px;border-left:1px dotted #c3c3c3"></div>
<div class="abs" style="left:997px;top:550px;width:0;height:32px;border-left:1px dotted #c3c3c3"></div>
<div class="abs" style="left:1157px;top:550px;width:0;height:32px;border-left:1px dotted #c3c3c3"></div>
<div class="abs" style="left:1357px;top:550px;width:0;height:32px;border-left:1px dotted #c3c3c3"></div>
<div class="abs" style="left:1517px;top:550px;width:0;height:32px;border-left:1px dotted #c3c3c3"></div>
<div class="abs" style="left:1614px;top:550px;width:0;height:32px;border-left:1px dotted #c3c3c3"></div>
<div class="abs" style="left:228px;top:550px;width:149px;height:33px;line-height:33px;text-align:center;font-size:13.4px;color:#222;white-space:nowrap">16/01/2026</div>
<div class="abs" style="left:388px;top:549px;height:33px;line-height:33px;font-size:12.8px;color:#1b74c5;white-space:nowrap">PC00002</div>
<div class="abs" style="left:508px;top:550px;height:33px;line-height:33px;font-size:13.4px;color:#222;white-space:nowrap">Chi tiền cho Hộ kinh doanh Hoàng Thị Lê</div>
<div class="abs" style="left:798px;top:550px;width:189px;text-align:right;height:33px;line-height:33px;font-size:13.4px;color:#222;white-space:nowrap">26.000.000</div>
<svg class="abs" style="left:1068px;top:557px" width="18" height="18" viewBox="0 0 18 18"><circle cx="9" cy="9" r="9" fill="#de2626"/><path d="M6.6 6.6l4.8 4.8M11.4 6.6l-4.8 4.8" fill="none" stroke="#fff" stroke-width="2" stroke-linecap="round"/></svg>
<svg class="abs" style="left:1248px;top:557px" width="18" height="18" viewBox="0 0 18 18"><circle cx="9" cy="9" r="9" fill="#2ea01f"/><path d="M5.6 9.3l2.2 2.1 4.4-4.3" fill="none" stroke="#fff" stroke-width="2" stroke-linecap="round" stroke-linejoin="round"/></svg>
<svg class="abs" style="left:1428px;top:557px" width="18" height="18" viewBox="0 0 18 18"><circle cx="9" cy="9" r="9" fill="#2ea01f"/><path d="M5.6 9.3l2.2 2.1 4.4-4.3" fill="none" stroke="#fff" stroke-width="2" stroke-linecap="round" stroke-linejoin="round"/></svg>
<div class="abs" style="left:1528px;top:562px;width:8px;height:8px;border-radius:4px;background:#de2626"></div>
<div class="abs" style="left:1518px;top:550px;width:96px;height:32px;overflow:hidden"><div class="abs" style="left:25px;top:0;line-height:33px;font-size:13.4px;color:#222;white-space:nowrap">Không hợp</div></div>
<div class="abs" style="left:1641px;top:549px;height:33px;line-height:33px;font-size:13.1px;font-weight:bold;color:#1b74c5;white-space:nowrap">Đánh dấu là CP không hợp lý</div>
<svg class="abs" style="left:1843px;top:563px" width="9" height="6" viewBox="0 0 9 6"><path d="M0 0h9L4.5 5.5Z" fill="#1b74c5"/></svg>
<div class="abs" style="left:228px;top:619px;width:1652px;height:1px;background:#d2d3d6"></div>
<div class="abs" style="left:377px;top:583px;width:0;height:36px;border-left:1px dotted #c3c3c3"></div>
<div class="abs" style="left:497px;top:583px;width:0;height:36px;border-left:1px dotted #c3c3c3"></div>
<div class="abs" style="left:797px;top:583px;width:0;height:36px;border-left:1px dotted #c3c3c3"></div>
<div class="abs" style="left:997px;top:583px;width:0;height:36px;border-left:1px dotted #c3c3c3"></div>
<div class="abs" style="left:1157px;top:583px;width:0;height:36px;border-left:1px dotted #c3c3c3"></div>
<div class="abs" style="left:1357px;top:583px;width:0;height:36px;border-left:1px dotted #c3c3c3"></div>
<div class="abs" style="left:1517px;top:583px;width:0;height:36px;border-left:1px dotted #c3c3c3"></div>
<div class="abs" style="left:1614px;top:583px;width:0;height:36px;border-left:1px dotted #c3c3c3"></div>
<div class="abs" style="left:228px;top:583px;width:149px;height:37px;line-height:37px;text-align:center;font-size:13.4px;color:#222;white-space:nowrap">18/01/2026</div>
<div class="abs" style="left:388px;top:582px;height:37px;line-height:37px;font-size:12.8px;color:#1b74c5;white-space:nowrap">PC00003</div>
<div class="abs" style="left:508px;top:584px;line-height:17.5px;font-size:13.4px;color:#222;white-space:nowrap;font-size:13.5px">Chi tiền cho Hộ kinh doanh Nguyễn Thị<br>Hương</div>
<div class="abs" style="left:798px;top:583px;width:189px;text-align:right;height:37px;line-height:37px;font-size:13.4px;color:#222;white-space:nowrap">10.500.000</div>
<svg class="abs" style="left:1068px;top:592px" width="18" height="18" viewBox="0 0 18 18"><circle cx="9" cy="9" r="9" fill="#de2626"/><path d="M6.6 6.6l4.8 4.8M11.4 6.6l-4.8 4.8" fill="none" stroke="#fff" stroke-width="2" stroke-linecap="round"/></svg>
<svg class="abs" style="left:1248px;top:592px" width="18" height="18" viewBox="0 0 18 18"><circle cx="9" cy="9" r="9" fill="#2ea01f"/><path d="M5.6 9.3l2.2 2.1 4.4-4.3" fill="none" stroke="#fff" stroke-width="2" stroke-linecap="round" stroke-linejoin="round"/></svg>
<svg class="abs" style="left:1428px;top:592px" width="18" height="18" viewBox="0 0 18 18"><circle cx="9" cy="9" r="9" fill="#2ea01f"/><path d="M5.6 9.3l2.2 2.1 4.4-4.3" fill="none" stroke="#fff" stroke-width="2" stroke-linecap="round" stroke-linejoin="round"/></svg>
<div class="abs" style="left:1528px;top:597px;width:8px;height:8px;border-radius:4px;background:#de2626"></div>
<div class="abs" style="left:1518px;top:583px;width:96px;height:36px;overflow:hidden"><div class="abs" style="left:25px;top:0;line-height:37px;font-size:13.4px;color:#222;white-space:nowrap">Không hợp</div></div>
<div class="abs" style="left:1641px;top:582px;height:37px;line-height:37px;font-size:13.1px;font-weight:bold;color:#1b74c5;white-space:nowrap">Đánh dấu là CP không hợp lý</div>
<svg class="abs" style="left:1843px;top:598px" width="9" height="6" viewBox="0 0 9 6"><path d="M0 0h9L4.5 5.5Z" fill="#1b74c5"/></svg>
<div class="abs" style="left:228px;top:656px;width:1652px;height:1px;background:#d2d3d6"></div>
<div class="abs" style="left:377px;top:620px;width:0;height:36px;border-left:1px dotted #c3c3c3"></div>
<div class="abs" style="left:497px;top:620px;width:0;height:36px;border-left:1px dotted #c3c3c3"></div>
<div class="abs" style="left:797px;top:620px;width:0;height:36px;border-left:1px dotted #c3c3c3"></div>
<div class="abs" style="left:997px;top:620px;width:0;height:36px;border-left:1px dotted #c3c3c3"></div>
<div class="abs" style="left:1157px;top:620px;width:0;height:36px;border-left:1px dotted #c3c3c3"></div>
<div class="abs" style="left:1357px;top:620px;width:0;height:36px;border-left:1px dotted #c3c3c3"></div>
<div class="abs" style="left:1517px;top:620px;width:0;height:36px;border-left:1px dotted #c3c3c3"></div>
<div class="abs" style="left:1614px;top:620px;width:0;height:36px;border-left:1px dotted #c3c3c3"></div>
<div class="abs" style="left:228px;top:620px;width:149px;height:37px;line-height:37px;text-align:center;font-size:13.4px;color:#222;white-space:nowrap">18/01/2026</div>
<div class="abs" style="left:388px;top:619px;height:37px;line-height:37px;font-size:12.8px;color:#1b74c5;white-space:nowrap">PC00004</div>
<div class="abs" style="left:508px;top:621px;line-height:17.5px;font-size:13.4px;color:#222;white-space:nowrap;font-size:13.5px">Chi tiền cho Hộ kinh doanh Nguyễn Thị<br>Hương</div>
<div class="abs" style="left:798px;top:620px;width:189px;text-align:right;height:37px;line-height:37px;font-size:13.4px;color:#222;white-space:nowrap">10.000.000</div>
<svg class="abs" style="left:1068px;top:629px" width="18" height="18" viewBox="0 0 18 18"><circle cx="9" cy="9" r="9" fill="#de2626"/><path d="M6.6 6.6l4.8 4.8M11.4 6.6l-4.8 4.8" fill="none" stroke="#fff" stroke-width="2" stroke-linecap="round"/></svg>
<svg class="abs" style="left:1248px;top:629px" width="18" height="18" viewBox="0 0 18 18"><circle cx="9" cy="9" r="9" fill="#2ea01f"/><path d="M5.6 9.3l2.2 2.1 4.4-4.3" fill="none" stroke="#fff" stroke-width="2" stroke-linecap="round" stroke-linejoin="round"/></svg>
<svg class="abs" style="left:1428px;top:629px" width="18" height="18" viewBox="0 0 18 18"><circle cx="9" cy="9" r="9" fill="#2ea01f"/><path d="M5.6 9.3l2.2 2.1 4.4-4.3" fill="none" stroke="#fff" stroke-width="2" stroke-linecap="round" stroke-linejoin="round"/></svg>
<div class="abs" style="left:1528px;top:634px;width:8px;height:8px;border-radius:4px;background:#de2626"></div>
<div class="abs" style="left:1518px;top:620px;width:96px;height:36px;overflow:hidden"><div class="abs" style="left:25px;top:0;line-height:37px;font-size:13.4px;color:#222;white-space:nowrap">Không hợp</div></div>
<div class="abs" style="left:1641px;top:619px;height:37px;line-height:37px;font-size:13.1px;font-weight:bold;color:#1b74c5;white-space:nowrap">Đánh dấu là CP không hợp lý</div>
<svg class="abs" style="left:1843px;top:635px" width="9" height="6" viewBox="0 0 9 6"><path d="M0 0h9L4.5 5.5Z" fill="#1b74c5"/></svg>
<div class="abs" style="left:228px;top:693px;width:1652px;height:1px;background:#d2d3d6"></div>
<div class="abs" style="left:377px;top:657px;width:0;height:36px;border-left:1px dotted #c3c3c3"></div>
<div class="abs" style="left:497px;top:657px;width:0;height:36px;border-left:1px dotted #c3c3c3"></div>
<div class="abs" style="left:797px;top:657px;width:0;height:36px;border-left:1px dotted #c3c3c3"></div>
<div class="abs" style="left:997px;top:657px;width:0;height:36px;border-left:1px dotted #c3c3c3"></div>
<div class="abs" style="left:1157px;top:657px;width:0;height:36px;border-left:1px dotted #c3c3c3"></div>
<div class="abs" style="left:1357px;top:657px;width:0;height:36px;border-left:1px dotted #c3c3c3"></div>
<div class="abs" style="left:1517px;top:657px;width:0;height:36px;border-left:1px dotted #c3c3c3"></div>
<div class="abs" style="left:1614px;top:657px;width:0;height:36px;border-left:1px dotted #c3c3c3"></div>
<div class="abs" style="left:228px;top:657px;width:149px;height:37px;line-height:37px;text-align:center;font-size:13.4px;color:#222;white-space:nowrap">18/01/2026</div>
<div class="abs" style="left:388px;top:656px;height:37px;line-height:37px;font-size:12.8px;color:#1b74c5;white-space:nowrap">PC00012</div>
<div class="abs" style="left:508px;top:658px;line-height:17.5px;font-size:13.4px;color:#222;white-space:nowrap;font-size:13.5px">Chi tiền cho Hộ kinh doanh Nguyễn Thị<br>Hương</div>
<div class="abs" style="left:798px;top:657px;width:189px;text-align:right;height:37px;line-height:37px;font-size:13.4px;color:#222;white-space:nowrap">2.360.000</div>
<svg class="abs" style="left:1068px;top:666px" width="18" height="18" viewBox="0 0 18 18"><circle cx="9" cy="9" r="9" fill="#de2626"/><path d="M6.6 6.6l4.8 4.8M11.4 6.6l-4.8 4.8" fill="none" stroke="#fff" stroke-width="2" stroke-linecap="round"/></svg>
<svg class="abs" style="left:1249px;top:666px" width="16" height="18" viewBox="0 0 16 18"><path d="M0.5 0.8h15M0.5 17.2h15" stroke="#ff7f2a" stroke-width="1.6"/><path d="M2.5 1v2.2c0 2.2 1.5 3.2 5.5 5.8 4-2.6 5.5-3.6 5.5-5.8V1" fill="none" stroke="#ff7f2a" stroke-width="1.6"/><path d="M2.3 17V14.5c0-2.5 2-3.5 5.7-6 3.7 2.5 5.7 3.5 5.7 6V17Z" fill="#ff7f2a"/></svg>
<svg class="abs" style="left:1429px;top:666px" width="16" height="18" viewBox="0 0 16 18"><path d="M0.5 0.8h15M0.5 17.2h15" stroke="#ff7f2a" stroke-width="1.6"/><path d="M2.5 1v2.2c0 2.2 1.5 3.2 5.5 5.8 4-2.6 5.5-3.6 5.5-5.8V1" fill="none" stroke="#ff7f2a" stroke-width="1.6"/><path d="M2.3 17V14.5c0-2.5 2-3.5 5.7-6 3.7 2.5 5.7 3.5 5.7 6V17Z" fill="#ff7f2a"/></svg>
<div class="abs" style="left:1528px;top:671px;width:8px;height:8px;border-radius:4px;background:#de2626"></div>
<div class="abs" style="left:1518px;top:657px;width:96px;height:36px;overflow:hidden"><div class="abs" style="left:25px;top:0;line-height:37px;font-size:13.4px;color:#222;white-space:nowrap">Không hợp</div></div>
<div class="abs" style="left:1641px;top:656px;height:37px;line-height:37px;font-size:13.1px;font-weight:bold;color:#1b74c5;white-space:nowrap">Đánh dấu là CP không hợp lý</div>
<svg class="abs" style="left:1843px;top:672px" width="9" height="6" viewBox="0 0 9 6"><path d="M0 0h9L4.5 5.5Z" fill="#1b74c5"/></svg>
<div class="abs" style="left:228px;top:730px;width:1652px;height:1px;background:#d2d3d6"></div>
<div class="abs" style="left:377px;top:694px;width:0;height:36px;border-left:1px dotted #c3c3c3"></div>
<div class="abs" style="left:497px;top:694px;width:0;height:36px;border-left:1px dotted #c3c3c3"></div>
<div class="abs" style="left:797px;top:694px;width:0;height:36px;border-left:1px dotted #c3c3c3"></div>
<div class="abs" style="left:997px;top:694px;width:0;height:36px;border-left:1px dotted #c3c3c3"></div>
<div class="abs" style="left:1157px;top:694px;width:0;height:36px;border-left:1px dotted #c3c3c3"></div>
<div class="abs" style="left:1357px;top:694px;width:0;height:36px;border-left:1px dotted #c3c3c3"></div>
<div class="abs" style="left:1517px;top:694px;width:0;height:36px;border-left:1px dotted #c3c3c3"></div>
<div class="abs" style="left:1614px;top:694px;width:0;height:36px;border-left:1px dotted #c3c3c3"></div>
<div class="abs" style="left:228px;top:694px;width:149px;height:37px;line-height:37px;text-align:center;font-size:13.4px;color:#222;white-space:nowrap">18/01/2026</div>
<div class="abs" style="left:388px;top:693px;height:37px;line-height:37px;font-size:12.8px;color:#1b74c5;white-space:nowrap">PC00013</div>
<div class="abs" style="left:508px;top:695px;line-height:17.5px;font-size:13.4px;color:#222;white-space:nowrap;font-size:13.5px">Chi tiền cho Hộ kinh doanh Nguyễn Thị<br>Hương</div>
<div class="abs" style="left:798px;top:694px;width:189px;text-align:right;height:37px;line-height:37px;font-size:13.4px;color:#222;white-space:nowrap">4.000.000</div>
<svg class="abs" style="left:1068px;top:703px" width="18" height="18" viewBox="0 0 18 18"><circle cx="9" cy="9" r="9" fill="#de2626"/><path d="M6.6 6.6l4.8 4.8M11.4 6.6l-4.8 4.8" fill="none" stroke="#fff" stroke-width="2" stroke-linecap="round"/></svg>
<svg class="abs" style="left:1249px;top:703px" width="16" height="18" viewBox="0 0 16 18"><path d="M0.5 0.8h15M0.5 17.2h15" stroke="#ff7f2a" stroke-width="1.6"/><path d="M2.5 1v2.2c0 2.2 1.5 3.2 5.5 5.8 4-2.6 5.5-3.6 5.5-5.8V1" fill="none" stroke="#ff7f2a" stroke-width="1.6"/><path d="M2.3 17V14.5c0-2.5 2-3.5 5.7-6 3.7 2.5 5.7 3.5 5.7 6V17Z" fill="#ff7f2a"/></svg>
<svg class="abs" style="left:1429px;top:703px" width="16" height="18" viewBox="0 0 16 18"><path d="M0.5 0.8h15M0.5 17.2h15" stroke="#ff7f2a" stroke-width="1.6"/><path d="M2.5 1v2.2c0 2.2 1.5 3.2 5.5 5.8 4-2.6 5.5-3.6 5.5-5.8V1" fill="none" stroke="#ff7f2a" stroke-width="1.6"/><path d="M2.3 17V14.5c0-2.5 2-3.5 5.7-6 3.7 2.5 5.7 3.5 5.7 6V17Z" fill="#ff7f2a"/></svg>
<div class="abs" style="left:1528px;top:708px;width:8px;height:8px;border-radius:4px;background:#de2626"></div>
<div class="abs" style="left:1518px;top:694px;width:96px;height:36px;overflow:hidden"><div class="abs" style="left:25px;top:0;line-height:37px;font-size:13.4px;color:#222;white-space:nowrap">Không hợp</div></div>
<div class="abs" style="left:1641px;top:693px;height:37px;line-height:37px;font-size:13.1px;font-weight:bold;color:#1b74c5;white-space:nowrap">Đánh dấu là CP không hợp lý</div>
<svg class="abs" style="left:1843px;top:709px" width="9" height="6" viewBox="0 0 9 6"><path d="M0 0h9L4.5 5.5Z" fill="#1b74c5"/></svg>
<div class="abs" style="left:228px;top:763px;width:1652px;height:1px;background:#d2d3d6"></div>
<div class="abs" style="left:377px;top:731px;width:0;height:32px;border-left:1px dotted #c3c3c3"></div>
<div class="abs" style="left:497px;top:731px;width:0;height:32px;border-left:1px dotted #c3c3c3"></div>
<div class="abs" style="left:797px;top:731px;width:0;height:32px;border-left:1px dotted #c3c3c3"></div>
<div class="abs" style="left:997px;top:731px;width:0;height:32px;border-left:1px dotted #c3c3c3"></div>
<div class="abs" style="left:1157px;top:731px;width:0;height:32px;border-left:1px dotted #c3c3c3"></div>
<div class="abs" style="left:1357px;top:731px;width:0;height:32px;border-left:1px dotted #c3c3c3"></div>
<div class="abs" style="left:1517px;top:731px;width:0;height:32px;border-left:1px dotted #c3c3c3"></div>
<div class="abs" style="left:1614px;top:731px;width:0;height:32px;border-left:1px dotted #c3c3c3"></div>
<div class="abs" style="left:228px;top:731px;width:149px;height:33px;line-height:33px;text-align:center;font-size:13.4px;color:#222;white-space:nowrap">26/01/2026</div>
<div class="abs" style="left:388px;top:730px;height:33px;line-height:33px;font-size:12.8px;color:#1b74c5;white-space:nowrap">PC00011</div>
<div class="abs" style="left:508px;top:731px;height:33px;line-height:33px;font-size:13.4px;color:#222;white-space:nowrap">Chi tiền cho Hộ kinh doanh Hoàng Thị Lê</div>
<div class="abs" style="left:798px;top:731px;width:189px;text-align:right;height:33px;line-height:33px;font-size:13.4px;color:#222;white-space:nowrap">26.000.000</div>
<svg class="abs" style="left:1068px;top:738px" width="18" height="18" viewBox="0 0 18 18"><circle cx="9" cy="9" r="9" fill="#de2626"/><path d="M6.6 6.6l4.8 4.8M11.4 6.6l-4.8 4.8" fill="none" stroke="#fff" stroke-width="2" stroke-linecap="round"/></svg>
<svg class="abs" style="left:1249px;top:738px" width="16" height="18" viewBox="0 0 16 18"><path d="M0.5 0.8h15M0.5 17.2h15" stroke="#ff7f2a" stroke-width="1.6"/><path d="M2.5 1v2.2c0 2.2 1.5 3.2 5.5 5.8 4-2.6 5.5-3.6 5.5-5.8V1" fill="none" stroke="#ff7f2a" stroke-width="1.6"/><path d="M2.3 17V14.5c0-2.5 2-3.5 5.7-6 3.7 2.5 5.7 3.5 5.7 6V17Z" fill="#ff7f2a"/></svg>
<svg class="abs" style="left:1429px;top:738px" width="16" height="18" viewBox="0 0 16 18"><path d="M0.5 0.8h15M0.5 17.2h15" stroke="#ff7f2a" stroke-width="1.6"/><path d="M2.5 1v2.2c0 2.2 1.5 3.2 5.5 5.8 4-2.6 5.5-3.6 5.5-5.8V1" fill="none" stroke="#ff7f2a" stroke-width="1.6"/><path d="M2.3 17V14.5c0-2.5 2-3.5 5.7-6 3.7 2.5 5.7 3.5 5.7 6V17Z" fill="#ff7f2a"/></svg>
<div class="abs" style="left:1528px;top:743px;width:8px;height:8px;border-radius:4px;background:#de2626"></div>
<div class="abs" style="left:1518px;top:731px;width:96px;height:32px;overflow:hidden"><div class="abs" style="left:25px;top:0;line-height:33px;font-size:13.4px;color:#222;white-space:nowrap">Không hợp</div></div>
<div class="abs" style="left:1641px;top:730px;height:33px;line-height:33px;font-size:13.1px;font-weight:bold;color:#1b74c5;white-space:nowrap">Đánh dấu là CP không hợp lý</div>
<svg class="abs" style="left:1843px;top:744px" width="9" height="6" viewBox="0 0 9 6"><path d="M0 0h9L4.5 5.5Z" fill="#1b74c5"/></svg>
<div class="abs" style="left:228px;top:796px;width:1652px;height:1px;background:#d2d3d6"></div>
<div class="abs" style="left:377px;top:764px;width:0;height:32px;border-left:1px dotted #c3c3c3"></div>
<div class="abs" style="left:497px;top:764px;width:0;height:32px;border-left:1px dotted #c3c3c3"></div>
<div class="abs" style="left:797px;top:764px;width:0;height:32px;border-left:1px dotted #c3c3c3"></div>
<div class="abs" style="left:997px;top:764px;width:0;height:32px;border-left:1px dotted #c3c3c3"></div>
<div class="abs" style="left:1157px;top:764px;width:0;height:32px;border-left:1px dotted #c3c3c3"></div>
<div class="abs" style="left:1357px;top:764px;width:0;height:32px;border-left:1px dotted #c3c3c3"></div>
<div class="abs" style="left:1517px;top:764px;width:0;height:32px;border-left:1px dotted #c3c3c3"></div>
<div class="abs" style="left:1614px;top:764px;width:0;height:32px;border-left:1px dotted #c3c3c3"></div>
<div class="abs" style="left:228px;top:764px;width:149px;height:33px;line-height:33px;text-align:center;font-size:13.4px;color:#222;white-space:nowrap">11/03/2026</div>
<div class="abs" style="left:388px;top:763px;height:33px;line-height:33px;font-size:12.8px;color:#1b74c5;white-space:nowrap">NK00005</div>
<div class="abs" style="left:508px;top:764px;height:33px;line-height:33px;font-size:13.4px;color:#222;white-space:nowrap">Mua hàng của Công ty TNHH Hải Hà</div>
<div class="abs" style="left:798px;top:764px;width:189px;text-align:right;height:33px;line-height:33px;font-size:13.4px;color:#222;white-space:nowrap">35.000.000</div>
<svg class="abs" style="left:1068px;top:771px" width="18" height="18" viewBox="0 0 18 18"><circle cx="9" cy="9" r="9" fill="#2ea01f"/><path d="M5.6 9.3l2.2 2.1 4.4-4.3" fill="none" stroke="#fff" stroke-width="2" stroke-linecap="round" stroke-linejoin="round"/></svg>
<svg class="abs" style="left:1248px;top:771px" width="18" height="18" viewBox="0 0 18 18"><circle cx="9" cy="9" r="9" fill="#ff7f2a"/><path d="M9 5v5" stroke="#fff" stroke-width="2" stroke-linecap="round"/><circle cx="9" cy="12.8" r="1.1" fill="#fff"/></svg>
<svg class="abs" style="left:1429px;top:771px" width="16" height="18" viewBox="0 0 16 18"><path d="M0.5 0.8h15M0.5 17.2h15" stroke="#ff7f2a" stroke-width="1.6"/><path d="M2.5 1v2.2c0 2.2 1.5 3.2 5.5 5.8 4-2.6 5.5-3.6 5.5-5.8V1" fill="none" stroke="#ff7f2a" stroke-width="1.6"/><path d="M2.3 17V14.5c0-2.5 2-3.5 5.7-6 3.7 2.5 5.7 3.5 5.7 6V17Z" fill="#ff7f2a"/></svg>
<div class="abs" style="left:1528px;top:776px;width:8px;height:8px;border-radius:4px;background:#de2626"></div>
<div class="abs" style="left:1518px;top:764px;width:96px;height:32px;overflow:hidden"><div class="abs" style="left:25px;top:0;line-height:33px;font-size:13.4px;color:#222;white-space:nowrap">Không hợp</div></div>
<div class="abs" style="left:1641px;top:763px;height:33px;line-height:33px;font-size:13.1px;font-weight:bold;color:#1b74c5;white-space:nowrap">Đánh dấu là CP không hợp lý</div>
<svg class="abs" style="left:1843px;top:777px" width="9" height="6" viewBox="0 0 9 6"><path d="M0 0h9L4.5 5.5Z" fill="#1b74c5"/></svg>
<div class="abs" style="left:228px;top:796px;width:1652px;height:25px;background:#e8e9ee;border-top:2px solid #c8c9cc"></div>
<div class="abs" style="left:228px;top:798px;width:149px;height:23px;line-height:23px;text-align:center;font-size:12.8px;font-weight:bold;color:#111">Tổng</div>
<div class="abs" style="left:798px;top:798px;width:189px;height:23px;line-height:23px;text-align:right;font-size:12.4px;font-weight:bold;color:#111">161.860.000</div>
<div class="abs" style="left:248px;top:835px;line-height:18px;font-size:13.6px;color:#555">Tổng số: <b style="color:#333">11</b> bản ghi</div>
<div class="abs" style="left:1498px;top:829px;width:200px;height:28px;border:1px solid #bcbcbc;border-radius:3px"></div>
<div class="abs" style="left:1509px;top:835px;line-height:18px;font-size:13.7px;color:#333">100 bản ghi trên 1 trang</div>
<svg class="abs" style="left:1678px;top:840px" width="9" height="6" viewBox="0 0 9 6"><path d="M0 0h9L4.5 5.5Z" fill="#333"/></svg>
<div class="abs" style="left:1714px;top:835px;line-height:18px;font-size:13.6px;color:#9a9a9a">Trước</div>
<div class="abs" style="left:1762px;top:833px;width:23px;height:20px;border:1px solid #dcdcdc;text-align:center;line-height:18px;font-size:13px;font-weight:bold;color:#222">1</div>
<div class="abs" style="left:1797px;top:835px;line-height:18px;font-size:13.6px;color:#9a9a9a">Sau</div>
<div class="abs" style="left:228px;top:865px;width:1652px;height:8px;background:#f1f1f1"></div>
<div class="abs" style="left:228px;top:865px;width:1600px;height:8px;border-radius:4px;background:#b8bdc4"></div>
<!-- /table -->
<!-- widget -->
<div class="abs" style="left:1904px;top:402px;width:16px;height:32px;border-radius:4px 0 0 4px;background:#0b6fe6"><svg class="abs" style="left:4px;top:11px" width="8" height="10" viewBox="0 0 8 10"><path d="M2 1.5L5.5 5L2 8.5" fill="none" stroke="#fff" stroke-width="1.8"/></svg></div>
<div class="abs" style="left:1862px;top:435px;width:70px;height:215px;border-radius:10px;background:#fff;box-shadow:-2px 2px 6px rgba(0,0,0,0.12)"></div>
<div class="abs" style="left:1870px;top:444px;width:40px;height:40px;border-radius:20px;background:#0b6fe6;box-shadow:0 2px 4px rgba(0,0,0,0.15)"></div>
<svg class="abs" style="left:1878px;top:452px" width="24" height="24" viewBox="0 0 24 24"><g transform="rotate(-40 12 12)" fill="#fff"><path d="M8 10h2.5l7-4v12l-7-4H8Z"/><rect x="5" y="10" width="2.5" height="4" rx="0.8"/><path d="M8.5 14.5h2.5l1 4.5h-2.3Z"/></g><path d="M17 4l1-1.8M19.5 6.5l1.8-.8M18.6 5l1.6-1.4" stroke="#fff" stroke-width="1" stroke-linecap="round"/></svg>
<div class="abs" style="left:1870px;top:494px;width:40px;height:40px;border-radius:15px;background:linear-gradient(#14d27a,#1ea85e)"></div>
<svg class="abs" style="left:1874px;top:498px" width="32" height="32" viewBox="0 0 32 32"><ellipse cx="16" cy="16" rx="12" ry="10.5" fill="#fff"/><circle cx="16" cy="16" r="7" fill="#1fb866"/><path d="M19 21l4 2-1-4Z" fill="#fff"/><circle cx="13.5" cy="16" r="1.3" fill="#fff"/><circle cx="18.5" cy="16" r="1.3" fill="#fff"/></svg>
<div class="abs" style="left:1870px;top:544px;width:40px;height:40px;border-radius:20px;background:#0b6fe6;box-shadow:0 2px 4px rgba(0,0,0,0.15)"></div>
<svg class="abs" style="left:1876px;top:552px" width="28" height="24" viewBox="0 0 28 24"><circle cx="6.5" cy="6" r="4" fill="#cfe3ff"/><circle cx="21.5" cy="6" r="4" fill="#cfe3ff"/><ellipse cx="14" cy="13" rx="11" ry="8.5" fill="#eaf3ff"/><rect x="6" y="8.5" width="16" height="9" rx="4.5" fill="#0a1f6e"/><circle cx="10.5" cy="13" r="2" fill="#6fa8ff"/><circle cx="17.5" cy="13" r="2" fill="#6fa8ff"/></svg>
<div class="abs" style="left:1870px;top:594px;width:40px;height:40px;border-radius:20px;background:#0b6fe6;box-shadow:0 2px 4px rgba(0,0,0,0.15)"></div>
<svg class="abs" style="left:1879px;top:605px" width="22" height="18" viewBox="0 0 22 18"><circle cx="11" cy="4.5" r="3.2" fill="#fff"/><circle cx="4" cy="5.5" r="2.3" fill="#fff"/><circle cx="18" cy="5.5" r="2.3" fill="#fff"/><path d="M5.5 17c0-4 2.3-7 5.5-7s5.5 3 5.5 7Z" fill="#fff"/><path d="M0.5 13c0-2.5 1.5-4.5 3.5-4.5 1 0 1.8.4 2.4 1-.7 1-1.2 2.2-1.4 3.5Z" fill="#fff"/><path d="M21.5 13c0-2.5-1.5-4.5-3.5-4.5-1 0-1.8.4-2.4 1 .7 1 1.2 2.2 1.4 3.5Z" fill="#fff"/></svg>
<!-- /widget -->
<div id="bottombar" class="abs"><div class="abs" style="left:833px;top:0;width:48px;height:4px;background:#3a3a3a"></div></div>
</body></html>
